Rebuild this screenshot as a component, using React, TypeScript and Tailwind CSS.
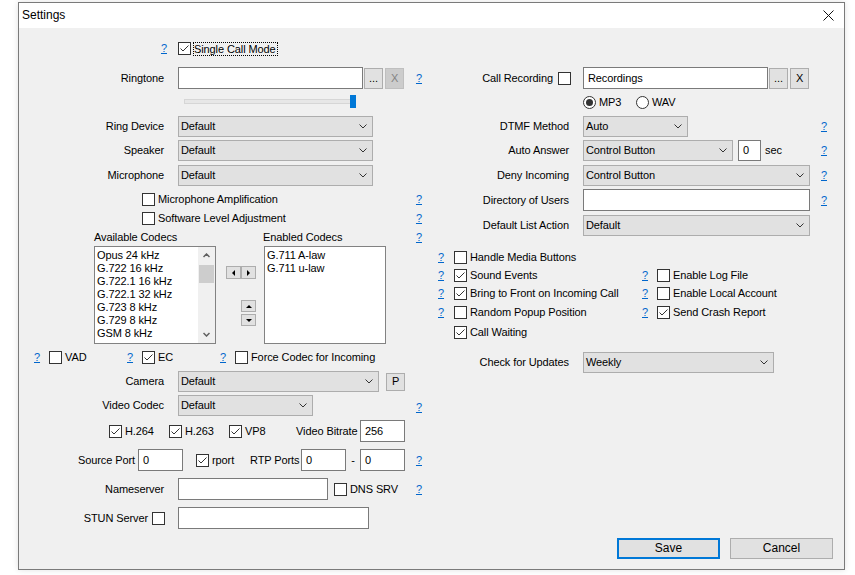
import React from "react";

const Q = ({ className = "" }: { className?: string }) => (
  <span className={`text-[#0066cc] underline underline-offset-[1px] leading-[13px] ${className}`}>?</span>
);

const Check = ({ on = false, className = "" }: { on?: boolean; className?: string }) => (
  <span
    className={`w-[13px] h-[13px] shrink-0 border border-[#333333] bg-white flex items-center justify-center ${className}`}
  >
    {on && (
      <svg width="11" height="11" viewBox="0 0 11 11">
        <polyline points="1.5,5.5 4,8 9.5,2.5" fill="none" stroke="#333333" strokeWidth="1" />
      </svg>
    )}
  </span>
);

const Radio = ({ on = false, className = "" }: { on?: boolean; className?: string }) => (
  <span
    className={`w-[13px] h-[13px] shrink-0 rounded-full border border-[#333333] bg-white flex items-center justify-center ${className}`}
  >
    {on && <span className="w-[7px] h-[7px] rounded-full bg-[#333333]" />}
  </span>
);

const Chevron = () => (
  <svg width="8" height="5" viewBox="0 0 8 5">
    <polyline points="0.5,0.5 4,4 7.5,0.5" fill="none" stroke="#333333" strokeWidth="1" />
  </svg>
);

const Combo = ({ text, className = "" }: { text: string; className?: string }) => (
  <div
    className={`h-[21px] shrink-0 bg-[#e1e1e1] border border-[#adadad] flex items-center justify-between pl-[2px] pr-[5px] ${className}`}
  >
    <span>{text}</span>
    <Chevron />
  </div>
);

const Input = ({ value = "", className = "" }: { value?: string; className?: string }) => (
  <div className={`shrink-0 bg-white border border-[#7a7a7a] flex items-center pl-[4px] ${className}`}>{value}</div>
);

const Btn = ({ children, className = "" }: { children?: React.ReactNode; className?: string }) => (
  <div className={`shrink-0 bg-[#e1e1e1] border border-[#adadad] flex items-center justify-center ${className}`}>
    {children}
  </div>
);

const Tri = ({ dir }: { dir: "l" | "r" | "u" | "d" }) => {
  const pts =
    dir === "l" ? "3,0 3,6 0,3" : dir === "r" ? "0,0 0,6 3,3" : dir === "u" ? "0,3 6,3 3,0" : "0,0 6,0 3,3";
  const w = dir === "l" || dir === "r" ? 3 : 6;
  const h = dir === "l" || dir === "r" ? 6 : 3;
  return (
    <svg width={w} height={h} viewBox={`0 0 ${w} ${h}`}>
      <polygon points={pts} fill="#000000" />
    </svg>
  );
};

const ScrollChev = ({ up }: { up?: boolean }) => (
  <svg width="7" height="5" viewBox="0 0 7 5">
    <polyline
      points={up ? "0.5,4 3.5,1 6.5,4" : "0.5,1 3.5,4 6.5,1"}
      fill="none"
      stroke="#606060"
      strokeWidth="1.5"
    />
  </svg>
);

const codecs = ["Opus 24 kHz", "G.722 16 kHz", "G.722.1 16 kHz", "G.722.1 32 kHz", "G.723 8 kHz", "G.729 8 kHz", "GSM 8 kHz"];

export default function App() {
  return (
    <div className="w-[855px] h-[575px] bg-white overflow-hidden font-['Liberation_Sans',Arial,sans-serif] text-[11px] leading-[13px] tracking-[-0.1px] text-black">
      <div className="ml-[18px] mt-[2px] w-[827px] h-[568px] border border-[#7a7a7a] bg-[#f0f0f0] flex flex-col shadow-[0_0_6px_rgba(0,0,0,0.12)]">
        {/* Title bar */}
        <div className="h-[25px] bg-white flex items-center justify-between shrink-0">
          <span className="pl-[3px] text-[12px] tracking-normal">Settings</span>
          <svg width="11" height="11" viewBox="0 0 11 11" className="mr-[10px]">
            <line x1="0.5" y1="0.5" x2="10.5" y2="10.5" stroke="#111111" strokeWidth="1" />
            <line x1="10.5" y1="0.5" x2="0.5" y2="10.5" stroke="#111111" strokeWidth="1" />
          </svg>
        </div>

        {/* Content */}
        <div className="flex-1 flex flex-col">
          <div className="flex">
            {/* Left column */}
            <div className="flex flex-col w-[403px] shrink-0">
              <div className="flex items-start h-[14px] mt-[14px]">
                <div className="w-[148px] text-right">
                  <Q />
                </div>
                <Check on className="ml-[11px]" />
                <span className="ml-[2px] h-[14px] border border-dotted border-black leading-[12px] pr-[1px]">
                  Single Call Mode
                </span>
              </div>

              <div className="flex items-center h-[22px] mt-[11px]">
                <div className="w-[145px] text-right">Ringtone</div>
                <Input className="ml-[14px] w-[185px] h-[22px]" />
                <Btn className="ml-[1px] w-[19px] h-[21px]">...</Btn>
                <div className="ml-[2px] w-[19px] h-[21px] bg-[#cccccc] border border-[#bfbfbf] text-[#838383] flex items-center justify-center">
                  X
                </div>
                <Q className="ml-auto" />
              </div>

              <div className="flex h-[13px] mt-[6px]">
                <div className="ml-[165px] w-[172px] h-[13px] relative">
                  <div className="absolute left-0 right-0 top-[4px] h-[5px] bg-[#e7e7e7] border border-[#d6d6d6]" />
                  <div className="absolute right-0 top-0 w-[6px] h-[13px] bg-[#0078d7]" />
                </div>
              </div>

              <div className="flex items-center h-[21px] mt-[8px]">
                <div className="w-[145px] text-right">Ring Device</div>
                <Combo text="Default" className="ml-[14px] w-[195px]" />
              </div>
              <div className="flex items-center h-[21px] mt-[3px]">
                <div className="w-[145px] text-right">Speaker</div>
                <Combo text="Default" className="ml-[14px] w-[195px]" />
              </div>
              <div className="flex items-center h-[21px] mt-[4px]">
                <div className="w-[145px] text-right">Microphone</div>
                <Combo text="Default" className="ml-[14px] w-[195px]" />
              </div>

              <div className="flex items-center h-[13px] mt-[7px]">
                <Check className="ml-[123px]" />
                <span className="ml-[3px]">Microphone Amplification</span>
                <Q className="ml-auto" />
              </div>
              <div className="flex items-center h-[13px] mt-[6px]">
                <Check className="ml-[123px]" />
                <span className="ml-[3px]">Software Level Adjustment</span>
                <Q className="ml-auto" />
              </div>

              <div className="flex items-center h-[13px] mt-[6px]">
                <span className="ml-[75px] w-[169px]">Available Codecs</span>
                <span>Enabled Codecs</span>
                <Q className="ml-auto" />
              </div>

              <div className="flex h-[98px] mt-[2px]">
                <div className="ml-[75px] w-[122px] h-[98px] bg-white border border-[#828282] flex overflow-hidden">
                  <div className="flex-1 pt-[2px] pl-[2px] overflow-hidden whitespace-nowrap">
                    {codecs.map((c) => (
                      <div key={c}>{c}</div>
                    ))}
                  </div>
                  <div className="w-[17px] bg-[#f0f0f0] flex flex-col shrink-0">
                    <div className="h-[17px] flex items-center justify-center">
                      <ScrollChev up />
                    </div>
                    <div className="h-[18px] mt-[1px] mx-[1px] bg-[#cdcdcd]" />
                    <div className="flex-1" />
                    <div className="h-[17px] flex items-center justify-center">
                      <ScrollChev />
                    </div>
                  </div>
                </div>
                <div className="w-[48px] pl-[10px] pt-[20px] flex flex-col shrink-0">
                  <div className="flex">
                    <Btn className="w-[15px] h-[13px]">
                      <Tri dir="l" />
                    </Btn>
                    <Btn className="w-[15px] h-[13px]">
                      <Tri dir="r" />
                    </Btn>
                  </div>
                  <div className="ml-[15px] mt-[21px] flex flex-col gap-[2px]">
                    <Btn className="w-[15px] h-[12px]">
                      <Tri dir="u" />
                    </Btn>
                    <Btn className="w-[15px] h-[12px]">
                      <Tri dir="d" />
                    </Btn>
                  </div>
                </div>
                <div className="w-[122px] h-[98px] bg-white border border-[#828282] pt-[2px] pl-[2px] shrink-0">
                  <div>G.711 A-law</div>
                  <div>G.711 u-law</div>
                </div>
              </div>

              <div className="flex items-center h-[13px] mt-[7px]">
                <div className="ml-[15px] w-[15px]">
                  <Q />
                </div>
                <Check />
                <span className="ml-[3px] w-[62px]">VAD</span>
                <div className="w-[15px]">
                  <Q />
                </div>
                <Check on />
                <span className="ml-[3px] w-[62px]">EC</span>
                <div className="w-[15px]">
                  <Q />
                </div>
                <Check />
                <span className="ml-[3px]">Force Codec for Incoming</span>
              </div>

              <div className="flex items-center h-[21px] mt-[7px]">
                <div className="w-[145px] text-right">Camera</div>
                <Combo text="Default" className="ml-[14px] w-[201px]" />
                <Btn className="ml-[7px] w-[19px] h-[18px]">P</Btn>
              </div>

              <div className="flex items-center h-[21px] mt-[3px]">
                <div className="w-[145px] text-right">Video Codec</div>
                <Combo text="Default" className="ml-[14px] w-[135px]" />
                <Q className="ml-auto mt-[4px]" />
              </div>

              <div className="flex items-center h-[22px] mt-[4px]">
                <Check on className="ml-[90px]" />
                <span className="ml-[3px] w-[44px]">H.264</span>
                <Check on />
                <span className="ml-[3px] w-[44px]">H.263</span>
                <Check on />
                <span className="ml-[3px] w-[51px]">VP8</span>
                <span className="w-[64px] text-right pr-[4px] whitespace-nowrap">Video Bitrate</span>
                <Input value="256" className="w-[45px] h-[22px]" />
              </div>

              <div className="flex items-center h-[22px] mt-[7px]">
                <span className="ml-[57px] w-[62px] text-right pr-[3px] whitespace-nowrap">Source Port</span>
                <Input value="0" className="w-[45px] h-[22px]" />
                <Check on className="ml-[13px]" />
                <span className="ml-[3px] w-[38px]">rport</span>
                <span className="w-[51px] text-right pr-[4px] whitespace-nowrap">RTP Ports</span>
                <Input value="0" className="w-[45px] h-[22px]" />
                <span className="w-[14px] text-center">-</span>
                <Input value="0" className="w-[45px] h-[22px]" />
                <Q className="ml-auto" />
              </div>

              <div className="flex items-center h-[22px] mt-[7px]">
                <div className="w-[145px] text-right">Nameserver</div>
                <Input className="ml-[14px] w-[150px] h-[22px]" />
                <Check className="ml-[6px]" />
                <span className="ml-[3px]">DNS SRV</span>
                <Q className="ml-auto" />
              </div>

              <div className="flex items-center h-[22px] mt-[7px]">
                <div className="w-[129px] text-right">STUN Server</div>
                <Check className="ml-[4px]" />
                <Input className="ml-[13px] w-[191px] h-[22px]" />
              </div>
            </div>

            {/* Right column */}
            <div className="flex flex-col w-[397px] ml-[8px] shrink-0">
              <div className="flex items-center h-[22px] mt-[39px]">
                <div className="w-[123px] text-right">Call Recording</div>
                <Check className="ml-[5px]" />
                <Input value="Recordings" className="ml-[12px] w-[185px] h-[22px]" />
                <Btn className="ml-[1px] w-[19px] h-[21px]">...</Btn>
                <Btn className="ml-[2px] w-[19px] h-[21px]">X</Btn>
              </div>

              <div className="flex items-center h-[13px] mt-[7px]">
                <Radio on className="ml-[153px]" />
                <span className="ml-[3px] w-[37px]">MP3</span>
                <Radio />
                <span className="ml-[3px]">WAV</span>
              </div>

              <div className="flex items-center h-[21px] mt-[7px]">
                <div className="w-[139px] text-right">DTMF Method</div>
                <Combo text="Auto" className="ml-[14px] w-[105px]" />
                <Q className="ml-auto" />
              </div>

              <div className="flex items-center h-[21px] mt-[3px]">
                <div className="w-[139px] text-right">Auto Answer</div>
                <Combo text="Control Button" className="ml-[14px] w-[150px]" />
                <Input value="0" className="ml-[5px] w-[23px] h-[21px]" />
                <span className="ml-[4px]">sec</span>
                <Q className="ml-auto" />
              </div>

              <div className="flex items-center h-[21px] mt-[4px]">
                <div className="w-[139px] text-right">Deny Incoming</div>
                <Combo text="Control Button" className="ml-[14px] w-[227px]" />
                <Q className="ml-auto" />
              </div>

              <div className="flex items-center h-[22px] mt-[3px]">
                <div className="w-[139px] text-right">Directory of Users</div>
                <Input className="ml-[14px] w-[227px] h-[22px]" />
                <Q className="ml-auto" />
              </div>

              <div className="flex items-center h-[21px] mt-[4px]">
                <div className="w-[139px] text-right">Default List Action</div>
                <Combo text="Default" className="ml-[14px] w-[227px]" />
              </div>

              <div className="flex items-center h-[13px] mt-[15px]">
                <div className="ml-[8px] w-[16px]">
                  <Q />
                </div>
                <Check />
                <span className="ml-[3px]">Handle Media Buttons</span>
              </div>
              <div className="flex items-center h-[13px] mt-[5px]">
                <div className="ml-[8px] w-[16px]">
                  <Q />
                </div>
                <Check on />
                <span className="ml-[3px] w-[172px]">Sound Events</span>
                <div className="w-[15px]">
                  <Q />
                </div>
                <Check />
                <span className="ml-[3px]">Enable Log File</span>
              </div>
              <div className="flex items-center h-[13px] mt-[5px]">
                <div className="ml-[8px] w-[16px]">
                  <Q />
                </div>
                <Check on />
                <span className="ml-[3px] w-[172px]">Bring to Front on Incoming Call</span>
                <div className="w-[15px]">
                  <Q />
                </div>
                <Check />
                <span className="ml-[3px]">Enable Local Account</span>
              </div>
              <div className="flex items-center h-[13px] mt-[6px]">
                <div className="ml-[8px] w-[16px]">
                  <Q />
                </div>
                <Check />
                <span className="ml-[3px] w-[172px]">Random Popup Position</span>
                <div className="w-[15px]">
                  <Q />
                </div>
                <Check on />
                <span className="ml-[3px]">Send Crash Report</span>
              </div>
              <div className="flex items-center h-[13px] mt-[7px]">
                <Check on className="ml-[24px]" />
                <span className="ml-[3px]">Call Waiting</span>
              </div>

              <div className="flex items-center h-[21px] mt-[13px]">
                <div className="w-[139px] text-right">Check for Updates</div>
                <Combo text="Weekly" className="ml-[14px] w-[191px]" />
              </div>
            </div>
          </div>

          {/* Footer buttons */}
          <div className="flex justify-end gap-[10px] pr-[11px] mt-[9px]">
            <div className="w-[103px] h-[21px] bg-[#e1e1e1] border-2 border-[#0078d7] flex items-center justify-center text-[12px] tracking-normal">
              Save
            </div>
            <div className="w-[103px] h-[21px] bg-[#e1e1e1] border border-[#adadad] flex items-center justify-center text-[12px] tracking-normal">
              Cancel
            </div>
          </div>
        </div>
      </div>
    </div>
  );
}
